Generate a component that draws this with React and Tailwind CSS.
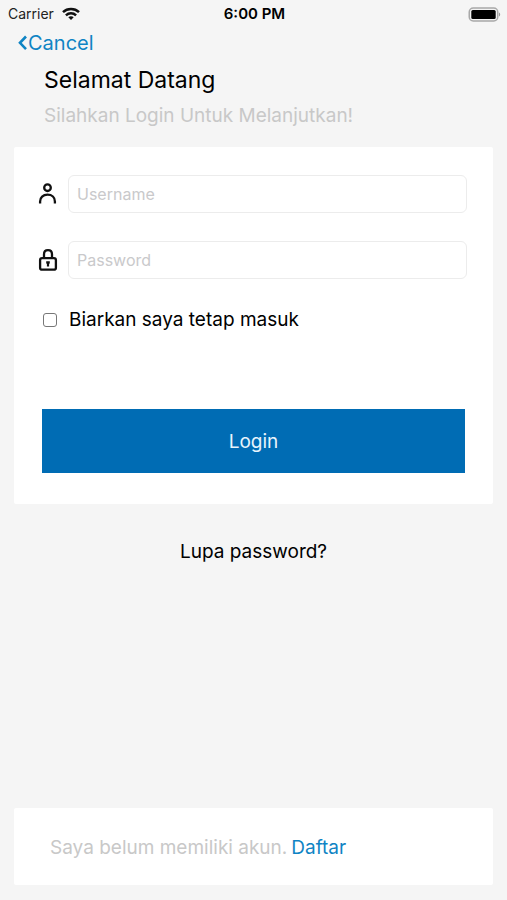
function WifiIcon() {
  return (
    <svg width="18" height="14" viewBox="0 0 18 14" aria-hidden="true">
      <g fill="none" stroke="#111" strokeWidth="2.5">
        <path d="M1 5.2C5.400 1 12.600 1 17 5.200" />
        <path d="M3.900 8.300C6.800 5.600 11.200 5.600 14.100 8.300" />
      </g>
      <path d="M6.300 10.300C7.800 8.900 10.200 8.900 11.700 10.300L9 13Z" fill="#111" />
    </svg>
  );
}

function BatteryIcon() {
  return (
    <svg width="33" height="15" viewBox="0 0 33 15" aria-hidden="true">
      <rect x="1.250" y="1" width="28.500" height="13" rx="4" fill="#f2f2f2" stroke="#a8a8a8" strokeWidth="1.500" />
      <rect x="3.300" y="3" width="24.400" height="9" rx="1.500" fill="#000" />
      <path d="M31 5.500C32.600 6 32.600 9 31 9.500Z" fill="#999" />
    </svg>
  );
}

function ChevronIcon() {
  return (
    <svg width="10" height="16" viewBox="0 0 10 16" fill="none" stroke="#0f84c4" strokeWidth="2.600" aria-hidden="true">
      <path d="M8 1.500L2 7.800L8 14.100" />
    </svg>
  );
}

function UserIcon() {
  return (
    <svg width="20" height="24" viewBox="0 0 20 24" fill="none" stroke="#111" strokeWidth="2.300" aria-hidden="true">
      <circle cx="9.500" cy="5.700" r="3.300" />
      <path d="M2.100 21.500V19.500C2.100 15.500 5 12.700 9.500 12.700S16.900 15.500 16.900 19.500V21.500" />
    </svg>
  );
}

function LockIcon() {
  return (
    <svg width="20" height="24" viewBox="0 0 20 24" fill="none" stroke="#111" strokeWidth="2.300" aria-hidden="true">
      <rect x="2.100" y="10.100" width="15.800" height="11.600" rx="2" />
      <path d="M6 10V6.200C6 3.700 7.700 2.100 10 2.100S14 3.700 14 6.200V10" />
      <path d="M8.200 13.300H11.800V15.200L11.100 16V18.500H8.900V16L8.200 15.200Z" fill="#111" stroke="none" />
    </svg>
  );
}

function Field({ id, type, label, icon }) {
  return (
    <div className="flex items-center gap-[10px]">
      <label htmlFor={id} aria-label={label} className="shrink-0">
        {icon}
      </label>
      <input
        id={id}
        type={type}
        placeholder={label}
        className="h-[38px] w-full min-w-0 rounded-md border border-[#ececec] bg-white px-2 text-base text-black outline-none placeholder:text-[#c9c9cb]"
      />
    </div>
  );
}

export default function App() {
  return (
    <div className="flex min-h-screen flex-col bg-[#f5f5f5] pb-[15px] font-['Inter','Liberation_Sans',sans-serif] text-black">
      <div className="grid h-7 grid-cols-3 items-center pl-2 pr-[6px] text-sm">
        <div className="flex items-center gap-2 text-[#222]">
          <span>Carrier</span>
          <WifiIcon />
        </div>
        <div className="text-center text-[15px] font-semibold">6:00 PM</div>
        <div className="flex justify-end">
          <BatteryIcon />
        </div>
      </div>

      <nav className="flex h-[30px] items-center px-[18px]">
        <a href="#cancel" className="flex items-center text-xl text-[#0f84c4]">
          <ChevronIcon />
          Cancel
        </a>
      </nav>

      <main className="flex flex-1 flex-col px-[14px] text-[19px] leading-7">
        <header className="px-[30px]">
          <h1 className="flex h-11 items-center text-[23px]">Selamat Datang</h1>
          <p className="text-[#c8c8c8]">Silahkan Login Untuk Melanjutkan!</p>
        </header>

        <form
          className="mt-[17px] rounded-[2px] bg-white px-7 pb-[31px] pt-7"
          onSubmit={(event) => event.preventDefault()}
        >
          <div className="-ml-1 -mr-0.5 flex flex-col gap-7">
            <Field id="username" type="text" label="Username" icon={<UserIcon />} />
            <Field id="password" type="password" label="Password" icon={<LockIcon />} />
          </div>
          <label className="mt-[27px] flex items-center gap-3">
            <input
              type="checkbox"
              className="ml-px size-[14px] shrink-0 appearance-none rounded-[3px] border border-[#777] bg-white checked:bg-[#006cb4]"
            />
            Biarkan saya tetap masuk
          </label>
          <button type="submit" className="mt-[75px] h-16 w-full bg-[#006cb4] pt-0.5 text-[#e8f4fc]">
            Login
          </button>
        </form>

        <a href="#lupa" className="mt-[34px] self-center">
          Lupa password?
        </a>

        <footer className="mt-auto flex h-[77px] items-center gap-1 rounded-[2px] bg-white px-9 pt-0.5 text-[#c8c8c8]">
          <span>Saya belum memiliki akun.</span>
          <a href="#daftar" className="text-[#0f84c4]">
            Daftar
          </a>
        </footer>
      </main>
    </div>
  );
}
